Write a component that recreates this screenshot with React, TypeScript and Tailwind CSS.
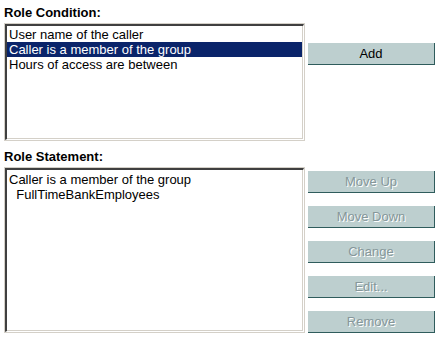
import React from "react";

const conditions = [
  "User name of the caller",
  "Caller is a member of the group",
  "Hours of access are between",
];

function ListBox({
  className,
  children,
}: {
  className: string;
  children: React.ReactNode;
}) {
  // Classic sunken Win32 list border
  return (
    <div className={`border border-[#d4d0c8] bg-white ${className}`}>
      <div className="h-full border-t-2 border-l-2 border-r border-b border-t-[#404040] border-l-[#404040] border-r-white border-b-white">
        <div className="h-full border-r border-b border-[#d4d0c8]">{children}</div>
      </div>
    </div>
  );
}

function Button({ label, disabled }: { label: string; disabled?: boolean }) {
  return (
    <button
      className={`h-[22px] w-[127px] bg-[#bdcfcf] border-r border-b border-[#2f5c5c] text-[13px] leading-[17px] ${
        disabled ? "text-[#86979a] [text-shadow:1px_1px_0_#ffffff]" : "text-black"
      }`}
    >
      {label}
    </button>
  );
}

export default function App() {
  return (
    <div className="w-[443px] h-[338px] bg-white pl-1 pt-[3px] font-['Liberation_Sans',Arial,sans-serif] text-black">
      <div className="text-[13px] font-bold leading-[20px]">Role Condition:</div>
      <div className="flex">
        <ListBox className="w-[301px] h-[118px]">
          <div className="pt-px text-[13px] leading-[15px]">
            {conditions.map((c, i) => (
              <div
                key={c}
                className={`pl-[2px] ${i === 1 ? "bg-[#0a246a] text-white" : ""}`}
              >
                {c}
              </div>
            ))}
          </div>
        </ListBox>
        <div className="ml-[3px] pt-[18px]">
          <Button label="Add" />
        </div>
      </div>
      <div className="mt-[6px] text-[13px] font-bold leading-[20px]">Role Statement:</div>
      <div className="flex">
        <ListBox className="w-[301px] h-[166px]">
          <div className="pt-[2px] pl-[2px] text-[13px] leading-[15px] whitespace-pre">
            <div>Caller is a member of the group</div>
            <div>{"  FullTimeBankEmployees"}</div>
          </div>
        </ListBox>
        <div className="ml-[3px] pt-[4px] flex flex-col gap-[13px]">
          <Button label="Move Up" disabled />
          <Button label="Move Down" disabled />
          <Button label="Change" disabled />
          <Button label="Edit..." disabled />
          <Button label="Remove" disabled />
        </div>
      </div>
    </div>
  );
}
